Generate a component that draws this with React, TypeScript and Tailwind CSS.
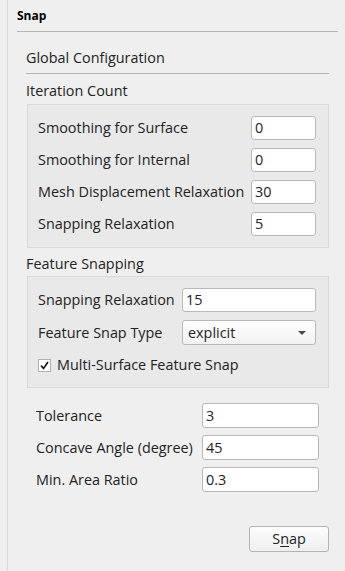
import React from "react";

type Field = { label: string; value: string };

const iterationFields: Field[] = [
  { label: "Smoothing for Surface", value: "0" },
  { label: "Smoothing for Internal", value: "0" },
  { label: "Mesh Displacement Relaxation", value: "30" },
  { label: "Snapping Relaxation", value: "5" },
];

const bottomFields: Field[] = [
  { label: "Tolerance", value: "3" },
  { label: "Concave Angle (degree)", value: "45" },
  { label: "Min. Area Ratio", value: "0.3" },
];

function TextBox({ value, width, height = "h-[24px]" }: { value: string; width: string; height?: string }) {
  return (
    <div
      className={`flex items-center rounded-[3px] border border-[#b9b9b9] bg-white pl-[3px] ${width} ${height}`}
    >
      {value}
    </div>
  );
}

function Row({ children }: { children: React.ReactNode }) {
  return <div className="flex items-center justify-between">{children}</div>;
}

export default function App() {
  return (
    <div
      className="flex h-[571px] w-[345px] bg-[#efefef] text-[14.4px] leading-[20px] text-[#232323]"
      style={{ fontFamily: '"Open Sans", "Noto Sans", sans-serif' }}
    >
      <div className="w-[8px] shrink-0 border-r border-[#d9d9d9]" />

      <div className="flex-1 pl-[9px] pr-[7px]">
        <div className="h-[32px] border-b border-[#b4b4b4] pt-[6px] text-[12px] font-bold text-black">
          Snap
        </div>

        <div className="px-[9px]">
          <div className="mt-[16px] border-b border-[#b4b4b4] pb-[5px]">Global Configuration</div>

          <div className="mt-[7px]">Iteration Count</div>

          <div className="ml-px mt-[3px] flex flex-col gap-[8px] border border-[#d9d9d9] bg-[#e9e9e9] pb-[11px] pl-[10px] pr-[12px] pt-[11px]">
            {iterationFields.map((f) => (
              <Row key={f.label}>
                <span>{f.label}</span>
                <TextBox value={f.value} width="w-[65px]" />
              </Row>
            ))}
          </div>

          <div className="mt-[6px]">Feature Snapping</div>

          <div className="ml-px mt-[2px] flex flex-col gap-[8px] border border-[#d9d9d9] bg-[#e9e9e9] pb-[10px] pl-[10px] pr-[12px] pt-[11px]">
            <Row>
              <span>Snapping Relaxation</span>
              <TextBox value="15" width="w-[134px]" />
            </Row>
            <Row>
              <span>Feature Snap Type</span>
              <div className="flex h-[25px] w-[134px] items-center justify-between rounded-[3px] border border-[#b9b9b9] bg-gradient-to-b from-white to-[#f2f2f2] pl-[5px] pr-[9px]">
                <span>explicit</span>
                <svg width="8" height="4" viewBox="0 0 8 4">
                  <path d="M0 0h8L4 4z" fill="#4a4a4a" />
                </svg>
              </div>
            </Row>
            <div className="flex h-[24px] items-center gap-[6px]">
              <div className="flex h-[13px] w-[13px] items-center justify-center border border-[#b0b0b0] bg-white">
                <svg width="9" height="9" viewBox="0 0 9 9">
                  <path d="M1 4.5 3.5 7.5 8 1" fill="none" stroke="#111" strokeWidth="1.6" />
                </svg>
              </div>
              <span>Multi-Surface Feature Snap</span>
            </div>
          </div>

          <div className="mt-[15px] flex flex-col gap-[7px] pl-[10px] pr-[10px]">
            {bottomFields.map((f) => (
              <Row key={f.label}>
                <span>{f.label}</span>
                <TextBox value={f.value} width="w-[117px]" height="h-[25px]" />
              </Row>
            ))}
          </div>

          <div className="mt-[34px] flex justify-end">
            <button className="flex h-[26px] w-[80px] items-center justify-center rounded-[3px] border border-[#b4b4b4] bg-gradient-to-b from-[#fcfcfc] to-[#efefef]">
              S<span className="underline underline-offset-2">n</span>ap
            </button>
          </div>
        </div>
      </div>
    </div>
  );
}
